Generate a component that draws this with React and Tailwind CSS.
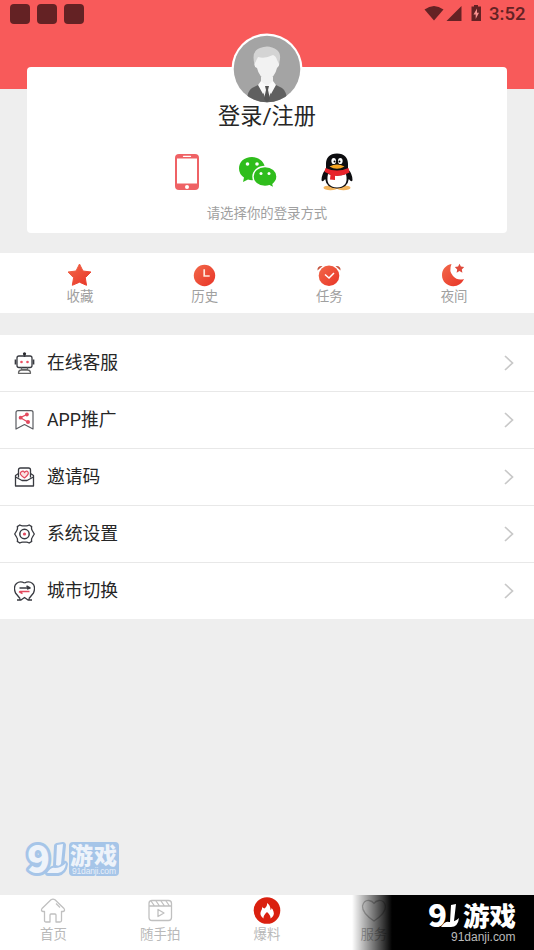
import React from "react";

const WarmGradient = ({ id }) => (
  <defs>
    <linearGradient id={id} x1="0" y1="0" x2="1" y2="1">
      <stop offset="0" stopColor="#f2694a" />
      <stop offset="1" stopColor="#e83427" />
    </linearGradient>
  </defs>
);

const StatusBar = () => (
  <div className="flex h-7 items-center justify-between pl-[10px] pr-[9px]">
    <div className="flex gap-[7.5px]">
      <i className="size-[19.5px] rounded-[4px] bg-[#642224]" />
      <i className="size-[19.5px] rounded-[4px] bg-[#642224]" />
      <i className="size-[19.5px] rounded-[4px] bg-[#642224]" />
    </div>
    <div className="flex items-center text-[#642224]">
      <svg width="60" height="20" viewBox="0 0 60 20" fill="currentColor">
        <path d="M0.5 5.5Q10-1.5 19.500 5.5L10 16.5Z" />
        <path d="M37.500 2V17H22.500Z" />
        <path d="M50 1h4v1.500H57V17H47.500V2.500h2.500Z" />
        <path d="M53 4.500l-3.500 6h2.200v4.500l3.300-6.300h-2Z" fill="#f8908e" />
      </svg>
      <span className="ml-[5px] w-[36px] font-[Roboto] text-[18.5px] font-medium leading-none">3:52</span>
    </div>
  </div>
);

const Avatar = () => (
  <svg className="absolute left-1/2 top-[-34px] -translate-x-1/2" width="72" height="72" viewBox="0 0 72 72">
    <defs><clipPath id="face"><circle cx="36" cy="36" r="33.300" /></clipPath></defs>
    <circle cx="36" cy="36" r="35.500" fill="#fff" />
    <g clipPath="url(#face)">
      <rect width="72" height="72" fill="#a4a4a4" />
      <path d="M15 72Q16 58 21 55L31 50H41L51 55Q56 58 57 72Z" fill="#606060" />
      <path d="M30 44h12v9l-6 17-6-17Z" fill="#f2f2f2" />
      <path d="M30 48l-3 4 5 9 4-7 4 7 5-9-3-4-6 5Z" fill="#fafafa" />
      <path d="M34 53h4l-1 4 2 9-3 4-3-4 2-9Z" fill="#555" />
      <path d="M25 24Q26 16 36 17Q47 16 47 26L48 29Q49 33 46 35Q44 44 36 48Q28 44 26 35Q22 33 24 29Z" fill="#f2f2f2" />
      <path d="M23.500 31Q20 18 29 15Q38 11 46 17Q51 21 48 31L46 27Q45 23 42 22Q34 26 27 24Z" fill="#d4d4d4" />
    </g>
  </svg>
);

const PhoneIcon = () => (
  <svg width="26" height="38" viewBox="0 0 26 38">
    <rect x="1" y="1" width="24" height="36" rx="4" fill="#ef6265" />
    <rect x="3" y="5.500" width="20" height="25" fill="#fff" />
    <path d="M9.500 3.300h7" stroke="#fff" strokeWidth="1.300" strokeLinecap="round" />
    <circle cx="13" cy="34" r="2" fill="#fff" />
  </svg>
);

const WeChatIcon = () => (
  <svg width="40" height="34" viewBox="0 0 40 34">
    <path d="M14 2C6 2 1 7 1 13.500Q1 19 6 22.500L5 27l5-2.500q3 1 6 .500C22 25 27 20 27 13.500S21 2 14 2Z" fill="#2fbd1c" />
    <path d="M27 11.500c-7 0-12 4.500-12 10s5 10 12 10q2.500 0 4.500-.800l4.500 2.500-1-4q4-3.200 4-7.700c0-5.500-5-10-12-10Z" fill="#2fbd1c" stroke="#fff" strokeWidth="1.400" />
    <circle cx="9.500" cy="9" r="1.800" fill="#fff" />
    <circle cx="19" cy="9" r="1.800" fill="#fff" />
    <circle cx="23" cy="18.500" r="1.500" fill="#fff" />
    <circle cx="31" cy="18.500" r="1.500" fill="#fff" />
  </svg>
);

const PenguinIcon = () => (
  <svg width="32" height="38" viewBox="0 0 32 38">
    <ellipse cx="9.500" cy="34.800" rx="7" ry="2.400" fill="#f3b45c" />
    <ellipse cx="22.500" cy="34.800" rx="7" ry="2.400" fill="#f3b45c" />
    <path d="M16 .500C8.500 .500 5 5 5 11v5Q.500 21 .500 27q.500 3 3.700-1 1 9 11.800 9.500 10.800-.500 11.800-9.500 3.200 4 3.700 1Q31.500 21 27 16v-5C27 5 23.500 .500 16 .500Z" fill="#0d0d10" />
    <path d="M7 21q9 3 18 0 3 13-9 13.500Q4 34 7 21Z" fill="#fff" />
    <path d="M4.500 15q11.500 5 23 0l1 4.500q-7 4-14.500 3.300v4.200l-5-.500.500-4.800-6-3Z" fill="#e8232b" />
    <ellipse cx="12.700" cy="8" rx="2.300" ry="3.100" fill="#fff" />
    <ellipse cx="19.300" cy="8" rx="2.300" ry="3.100" fill="#fff" />
    <circle cx="13.500" cy="8.500" r="1" />
    <circle cx="18.500" cy="8.500" r="1" />
    <path d="M8.500 13.500q7.500-4 15 0-7.500 4.500-15 0Z" fill="#f5a623" />
  </svg>
);

const tools = [
  { label: "收藏", icon: (
    <svg width="26" height="24" viewBox="0 0 26 24">
      <WarmGradient id="star" />
      <path d="M12.500 1l3.500 7 8 1-5.700 5.700L19.500 22.300l-7-3.100-7.200 3.100L6.600 14.700 1 9l8-1Z" fill="url(#star)" stroke="url(#star)" strokeLinejoin="round" />
    </svg>) },
  { label: "历史", icon: (
    <svg width="26" height="24" viewBox="0 0 26 24">
      <WarmGradient id="clock" />
      <circle cx="12.500" cy="12.500" r="10.700" fill="url(#clock)" />
      <path d="M12.200 6.300v6.700h5.500" stroke="#ffe9dc" strokeWidth="1.700" fill="none" />
    </svg>) },
  { label: "任务", icon: (
    <svg width="26" height="24" viewBox="0 0 26 24">
      <WarmGradient id="alarm" />
      <path d="M1.500 7.500Q1 2.500 6.500 3ZM24.500 7.500Q25 2.500 19.500 3Z" fill="#c5553f" />
      <circle cx="13" cy="12.700" r="10.300" fill="url(#alarm)" />
      <path d="M9 11.500l4 3.500 5-5" stroke="#fff" strokeWidth="1.500" fill="none" />
    </svg>) },
  { label: "夜间", icon: (
    <svg width="26" height="24" viewBox="0 0 26 24">
      <WarmGradient id="moon" />
      <path d="M10.500 1Q7.500 8 12 13t11 3C21 20.500 17 23.200 12.300 23.200 6 23.200 1 18.500 1 12.300S5 2 10.500 1Z" fill="url(#moon)" />
      <path d="M18.500 .700l1.400 2.900 3.300.500-2.400 2.300.600 3.300-2.900-1.600-2.900 1.600.600-3.300-2.400-2.300 3.300-.500Z" fill="#df4a3c" />
    </svg>) },
];

const LineIcon = ({ children }) => (
  <svg className="ml-[14px] mr-3 shrink-0" width="21" height="22" viewBox="0 0 21 22" fill="none" stroke="#383a40" strokeWidth="1.300" strokeLinejoin="round">
    {children}
  </svg>
);

const rows = [
  { label: "在线客服", icon: (
    <LineIcon>
      <circle cx="10.500" cy="1.800" r="1.600" fill="#25262b" stroke="none" />
      <path d="M10.500 3v2M1.500 7.500v5M19.500 7.500v5" strokeWidth="1.700" />
      <rect x="3" y="4" width="15" height="11.500" rx="2" />
      <path d="M7.500 15.500v2h6v-2M4.500 21.300q0-3.300 3-3.300h6q3 0 3 3.300Z" stroke="#666" />
      <circle cx="7.500" cy="10" r="1.300" fill="#ed5264" stroke="none" />
      <circle cx="13.500" cy="10" r="1.300" fill="#ed5264" stroke="none" />
    </LineIcon>) },
  { label: "APP推广", icon: (
    <LineIcon>
      <path d="M2 20V3.500Q2 1.700 4 1.700h13Q19 1.700 19 3.500V20L10.500 15.500Z" strokeWidth="1.200" stroke="#5a5c61" />
      <path d="M12.700 5.500L6.500 8.700l7.300 4.300" stroke="#e2495e" />
      <g fill="#e2495e" stroke="none"><circle cx="12.900" cy="5.500" r="1.900" /><circle cx="6.600" cy="8.700" r="1.900" /><circle cx="14" cy="13" r="2" /></g>
    </LineIcon>) },
  { label: "邀请码", icon: (
    <LineIcon>
      <path d="M4.500 7.500L1.500 9.500V20h18V9.500l-3-2" />
      <path d="M4.500 11.500V4q0-2 2-2h8q2 0 2 2v7.500M1.500 11l6.500 3.500h5L19.500 11" />
      <path d="M10.500 12Q4.500 8 7 6t3.500.600Q12.500 4 14 6t-3.500 6Z" fill="#fbe1e1" stroke="#e2495e" strokeWidth="1.200" />
    </LineIcon>) },
  { label: "系统设置", icon: (
    <LineIcon>
      <path d="M5.800 2q1.500.900 2.700.900h4q1.200 0 2.700-.900l2.500 1.600q-.600 2.200.500 3.900l2.100 3.500-2.100 3.500q-1.100 1.700-.500 3.900L15.200 20q-1.500-.900-2.700-.900h-4q-1.200 0-2.700.900l-2.500-1.600q.600-2.200-.500-3.900L.700 11l2.100-3.500q1.100-1.700.500-3.900Z" />
      <circle cx="10.500" cy="11" r="4.700" strokeWidth="1.500" />
      <circle cx="10.500" cy="11" r="1.600" fill="#e2495e" stroke="none" />
    </LineIcon>) },
  { label: "城市切换", icon: (
    <LineIcon>
      <path d="M10.500 3Q6 .500 2.500 3.500T1.500 13L6 18.500M10.500 3Q15 .500 18.500 3.500t1 9.500L15 18.500" />
      <path d="M3 20h4l3.500-2.500L14 20h4M6 18.500v1.500M15 18.500V20" />
      <path d="M5.500 8H15M12.500 5.800l3.500 2.200-3 1" strokeWidth="1.500" />
      <path d="M15.500 11.500H6M8.500 13.700L5 11.500" stroke="#e2495e" strokeWidth="1.500" />
    </LineIcon>) },
];

const NavIcon = ({ children }) => (
  <svg width="28" height="28" viewBox="0 0 28 28" fill="none" stroke="#c0c0c0" strokeWidth="1.300" strokeLinejoin="round">
    {children}
  </svg>
);

const tabs = [
  { label: "首页", icon: (
    <NavIcon>
      <path d="M12 2.800Q14 1.500 16 2.800L25 11.500q1.500 2.500-1 3H22.500v9q0 1.500-1.500 1.500h-4v-7q0-1-1-1h-4q-1 0-1 1v7H7q-1.500 0-1.500-1.500v-9H4q-2.500-.500-1-3Z" />
      <path d="M17 6.500l4 4" />
    </NavIcon>) },
  { label: "随手拍", icon: (
    <NavIcon>
      <rect x="3" y="3.500" width="22.500" height="20" rx="3" />
      <path d="M3 9h22.500M5 4l3.500 5M10 4l3.500 5M15 4l3.500 5M20 4l3.500 5M12 12.500v7l6-3.500Z" />
    </NavIcon>) },
  { label: "爆料", icon: (
    <NavIcon>
      <circle cx="14" cy="13.500" r="13.300" fill="#da200f" stroke="none" />
      <path d="M14 6q.500 3-2.500 5.500Q8.500 10.500 9 9.500 9.500 12 8 14 6 18 10.500 21.500q-.500-3 3.500-6.500 4 3.500 3.500 6.500Q22 18.500 20.500 14.500 20 12 18.500 11q.200 1.500-1 2Q17.500 8 14 6Z" fill="#fff" stroke="none" />
    </NavIcon>) },
  { label: "服务", icon: (
    <NavIcon><path d="M14 24Q2 16 2.500 9 4 3 9 3.500q3.500.500 5 3 1.500-2.500 5-3Q24 3 25.500 9 26 16 14 24Z" /></NavIcon>) },
  { label: "我的", icon: <NavIcon /> },
];

const SiteBadge = () => (
  <svg className="block" width="96" height="44" viewBox="0 0 96 44" fontFamily="'Noto Sans CJK SC', sans-serif">
    <g fill="#a6c5e8" stroke="#a6c5e8" strokeWidth="6" strokeLinejoin="round">
      <path d="M33 7l6-1-2 20-5 1ZM24 34q4-5 8-5 5 0 9-4-1 8-7 9Z" />
      <rect x="48" y="6" width="44" height="28" rx="1" />
    </g>
    <g fill="#eef3fa" stroke="#a6c5e8" strokeWidth="6" paintOrder="stroke" strokeLinejoin="round">
      <text x="3" y="34" fontSize="38" fontWeight="900" fontFamily="'Noto Sans CJK SC', sans-serif" textLength="23" lengthAdjust="spacingAndGlyphs">9</text>
    </g>
    <path d="M33 6l6-1-2 20q-2 3-5 1ZM23 34q4-6 8-5 6 0 11-5-1 9-8 10Z" fill="#eef3fa" />
    <text x="46" y="25" fontSize="23" fontWeight="900" textLength="47" fill="#eef3fa">游戏</text>
    <text x="48" y="35" fontSize="8.500" fill="#e8f0fa" fontFamily="'Liberation Sans', sans-serif" textLength="44">91danji.com</text>
  </svg>
);

const CornerMark = () => (
  <svg className="block" width="96" height="55" viewBox="0 0 96 55" fill="#fff" fontFamily="'Noto Sans CJK SC', sans-serif">
    <text x="4" y="32" fontSize="31" fontWeight="900" textLength="19" lengthAdjust="spacingAndGlyphs">9</text>
    <path d="M27 10l5-1-2 17q-2 2-4 1ZM17 32q4-6 8-5 6 0 10-4-1 9-8 9Z" />
    <text x="39" y="31" fontSize="26.500" fontWeight="900" textLength="53">游戏</text>
    <text x="27" y="46" fontSize="12" fill="#bbb" fontFamily="'Liberation Sans', sans-serif" textLength="64.500">91danji.com</text>
  </svg>
);

export default function App() {
  return (
    <main className="relative flex h-[950px] w-[534px] flex-col overflow-hidden bg-[#eeeeee] font-['Roboto','Noto_Sans_CJK_SC',sans-serif] text-[#262626]">
      <header className="h-[253px] shrink-0 bg-[linear-gradient(#f85a5a_89px,#eeeeee_89px)]">
        <StatusBar />
        <section className="relative mx-[27px] mt-[39px] flex h-[166px] flex-col items-center rounded-[4px] bg-white pt-[33px]">
          <Avatar />
          <h1 className="text-[22.200px] leading-8">登录/注册</h1>
          <div className="mt-[21px] flex h-[38px] items-center pr-[7px]">
            <PhoneIcon />
            <div className="ml-[38px] mr-[43px]"><WeChatIcon /></div>
            <PenguinIcon />
          </div>
          <p className="mt-[13px] text-[13.400px] leading-5 text-[#a0a0a0]">请选择你的登录方式</p>
        </section>
      </header>

      <nav className="flex h-[60px] shrink-0 justify-center bg-white pt-[10px]">
        {tools.map((t) => (
          <div key={t.label} className="flex w-[124.700px] flex-col items-center">
            {t.icon}
            <span className="text-[13.400px] leading-5 text-[#a0a0a0]">{t.label}</span>
          </div>
        ))}
      </nav>

      <ul className="mt-[22px] shrink-0">
        {rows.map((r, i) => (
          <li key={r.label} className={i < 4 ? "flex h-[57px] items-center border-b border-[#e8e8e8] bg-white" : "flex h-[56px] items-center bg-white"}>
            {r.icon}
            <span className="flex-1 text-[17.800px] leading-6">{r.label}</span>
            <svg className="mr-[20px]" width="10" height="16" viewBox="0 0 10 16" fill="none" stroke="#c8c8c8" strokeWidth="1.700">
              <path d="M1 1l7.500 7L1 15" />
            </svg>
          </li>
        ))}
      </ul>

      <footer className="mt-auto flex h-[55px] shrink-0 bg-white pt-[2px]">
        {tabs.map((t) => (
          <div key={t.label} className="flex flex-1 flex-col items-center">
            {t.icon}
            <span className="text-[13.400px] leading-5 text-[#b9b9b9]">{t.label}</span>
          </div>
        ))}
      </footer>

      <div className="absolute left-[24px] top-[839px]"><SiteBadge /></div>
      <div className="absolute bottom-0 right-0 flex h-[55px] w-[182px] justify-end bg-[linear-gradient(90deg,transparent,#000_40px)] pr-[14px]">
        <CornerMark />
      </div>
    </main>
  );
}
